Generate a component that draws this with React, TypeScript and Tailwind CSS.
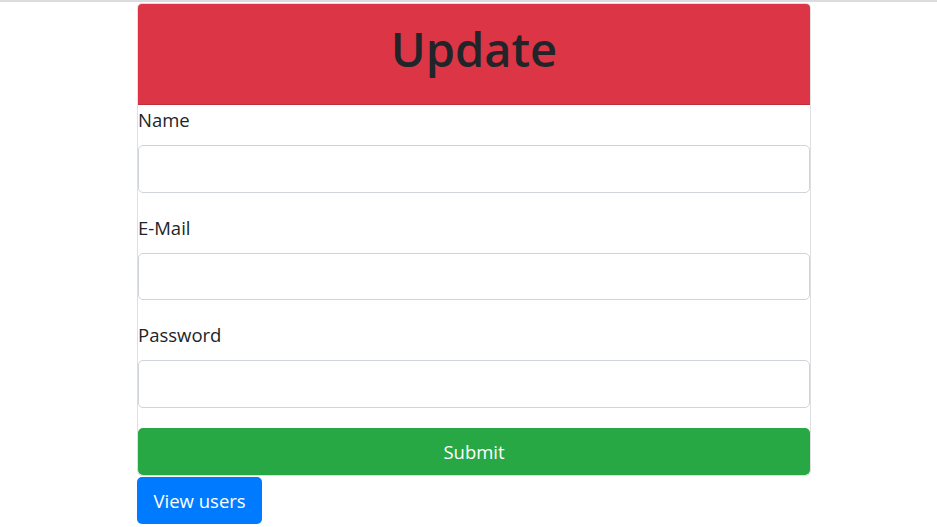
import React from 'react';

const fields = [
  { label: 'Name', type: 'text' },
  { label: 'E-Mail', type: 'email' },
  { label: 'Password', type: 'password' },
];

export default function App() {
  return (
    <div className="min-h-screen bg-white text-[#212529] font-['Open_Sans','Noto_Sans',sans-serif]">
      <div className="h-[2px] bg-[#dcdce0]" />
      <div className="ml-[137px] w-[674px] pt-px">
        <div className="border border-[#dfdfdf] rounded-[5px] overflow-hidden">
          <div className="bg-[#dc3545] border-b border-[#c02e3c] pt-[15px] pb-[25px] text-center">
            <h1 className="text-[47px] leading-[60px] font-semibold">Update</h1>
          </div>
          <form onSubmit={(e) => e.preventDefault()}>
            {fields.map((f) => (
              <div key={f.label} className="mb-5">
                <label className="block text-[18.5px] leading-[30px] mb-[10px]">{f.label}</label>
                <input
                  type={f.type}
                  className="block w-full h-[47.5px] border border-[#ced4da] rounded-[5px] px-[15px] text-[18.5px] outline-none"
                />
              </div>
            ))}
            <button
              type="submit"
              className="block w-full h-[47.5px] bg-[#28a745] text-white text-[18.5px] leading-[30px] pt-[2px] rounded-[5px]"
            >
              Submit
            </button>
          </form>
        </div>
        <button className="mt-px h-[46.5px] px-[16.5px] pt-[2px] bg-[#007bff] text-white text-[18.5px] rounded-[5px]">
          View users
        </button>
      </div>
    </div>
  );
}
